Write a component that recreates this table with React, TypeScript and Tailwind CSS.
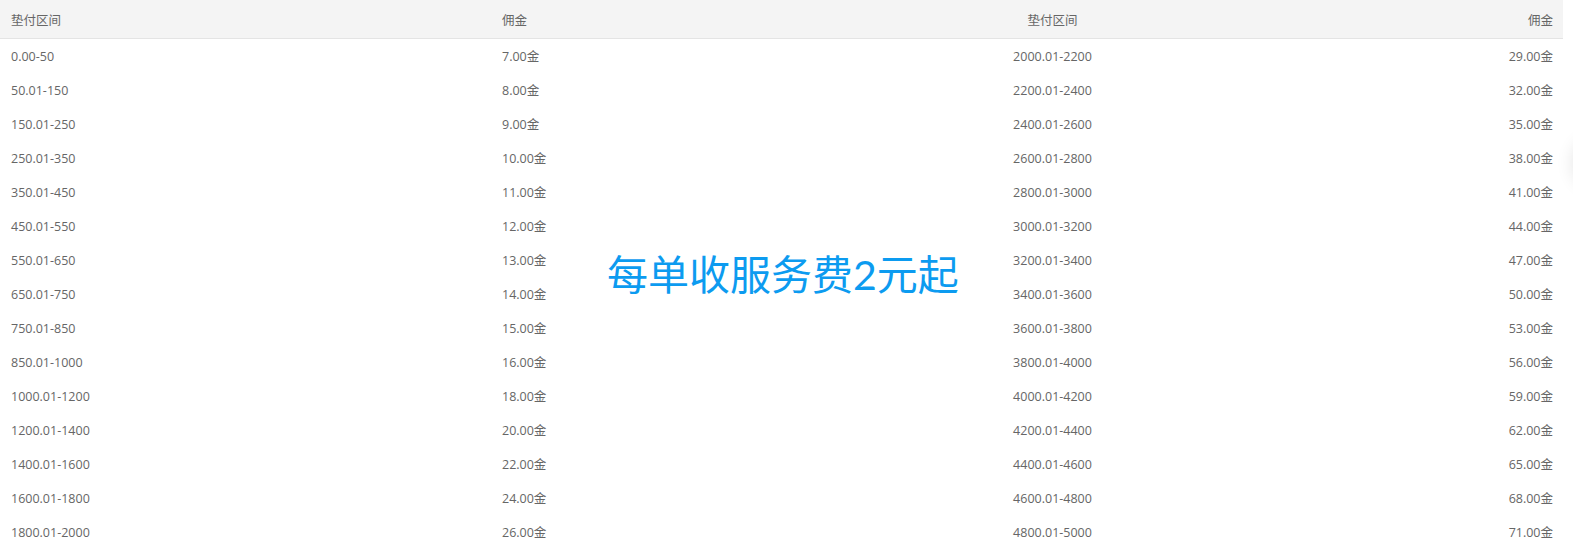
import React from 'react'

// DATA

const rows: [string, string, string, string][] = [
  ['0.00-50', '7.00金', '2000.01-2200', '29.00金'],
  ['50.01-150', '8.00金', '2200.01-2400', '32.00金'],
  ['150.01-250', '9.00金', '2400.01-2600', '35.00金'],
  ['250.01-350', '10.00金', '2600.01-2800', '38.00金'],
  ['350.01-450', '11.00金', '2800.01-3000', '41.00金'],
  ['450.01-550', '12.00金', '3000.01-3200', '44.00金'],
  ['550.01-650', '13.00金', '3200.01-3400', '47.00金'],
  ['650.01-750', '14.00金', '3400.01-3600', '50.00金'],
  ['750.01-850', '15.00金', '3600.01-3800', '53.00金'],
  ['850.01-1000', '16.00金', '3800.01-4000', '56.00金'],
  ['1000.01-1200', '18.00金', '4000.01-4200', '59.00金'],
  ['1200.01-1400', '20.00金', '4200.01-4400', '62.00金'],
  ['1400.01-1600', '22.00金', '4400.01-4600', '65.00金'],
  ['1600.01-1800', '24.00金', '4600.01-4800', '68.00金'],
  ['1800.01-2000', '26.00金', '4800.01-5000', '71.00金'],
]

const cols = 'grid grid-cols-[490px_310px_505px_258px]'

// COMPONENTS

const Row = ({ cells, head }: { cells: string[]; head?: boolean }) => (
  <div className={`${cols} ${head ? 'h-[39px] bg-[#f4f4f4] border-b border-[#e4e4e4] pt-[4px]' : 'h-[34px] pt-[2px]'} items-center`}>
    <span className="pl-[11px]">{cells[0]}</span>
    <span className="pl-[12px]">{cells[1]}</span>
    <span className="text-center">{cells[2]}</span>
    <span className="text-right pr-[10px]">{cells[3]}</span>
  </div>
)

export default function App() {
  return (
    <div
      className="relative w-[1573px] h-[553px] overflow-hidden bg-white text-[12.5px] text-[#666]"
      style={{ fontFamily: '"Open Sans", "Noto Sans CJK SC", sans-serif' }}
    >
      <div className="w-[1563px]">
        <Row head cells={['垫付区间', '佣金', '垫付区间', '佣金']} />
        {rows.map((r, i) => (
          <Row key={i} cells={r} />
        ))}
      </div>

      {/* overlay note */}
      <div
        className="absolute left-[607px] top-[246px] text-[41px] leading-[58px] text-[#0c9bf0]"
        style={{ fontFamily: 'Lato, "Noto Sans CJK SC", sans-serif' }}
      >
        每单收服务费2元起
      </div>

      {/* floating button shadow at the edge */}
      <div className="absolute left-[1573px] top-[138px] w-[50px] h-[50px] rounded-full bg-white shadow-[0_0_18px_rgba(0,0,0,0.12)]" />
    </div>
  )
}
